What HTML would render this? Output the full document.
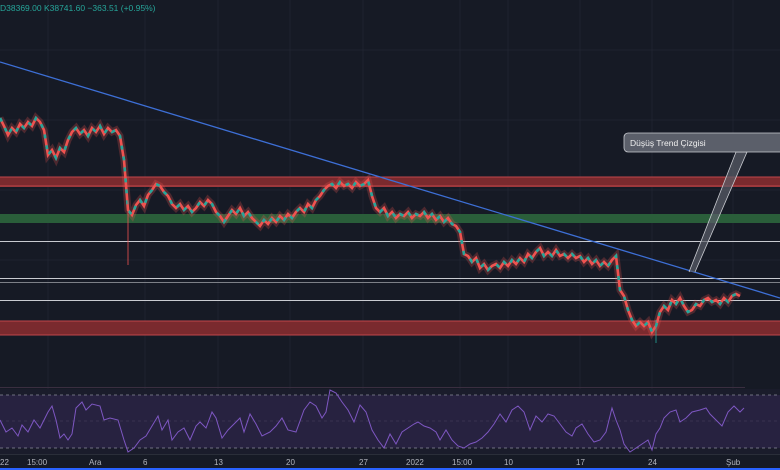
<!DOCTYPE html>
<html><head><meta charset="utf-8"><style>
html,body{margin:0;padding:0;background:#161a25;width:780px;height:470px;overflow:hidden;font-family:"Liberation Sans",sans-serif}
svg{display:block}
</style></head><body>
<svg width="780" height="470" xmlns="http://www.w3.org/2000/svg">
<defs>
<polyline id="pp" fill="none" points="0,118 4,126 8,135 12,128 16,132 20,124 24,128 28,122 32,126 36,118 40,122 44,130 48,155 52,150 56,158 60,148 64,152 68,140 72,132 76,128 80,134 84,130 88,136 92,128 96,132 100,126 104,134 108,128 112,132 116,130 120,136 124,160 126,185 128,210 132,215 136,205 140,200 144,206 148,195 152,190 156,184 160,186 164,192 168,196 172,204 176,208 180,204 184,210 188,206 192,212 196,208 200,202 204,206 208,200 212,204 216,212 220,216 224,222 228,216 232,210 236,214 240,208 244,216 248,212 252,218 256,222 260,226 264,220 268,224 272,218 276,222 280,216 284,220 288,214 292,218 296,212 300,208 304,212 308,204 312,208 316,200 320,196 324,190 328,186 332,184 336,188 340,182 344,186 348,184 352,188 356,182 360,186 364,184 368,180 372,196 376,208 380,212 384,208 388,216 392,212 396,218 400,214 404,216 408,212 412,218 416,214 420,216 424,212 428,218 432,214 436,220 440,216 444,222 448,218 452,224 456,226 460,232 464,254 468,256 472,262 476,258 480,268 484,264 488,270 492,266 496,264 500,268 504,262 508,266 512,260 516,264 520,258 524,262 528,254 532,258 536,252 540,248 544,256 548,252 552,256 556,250 560,256 564,254 568,258 572,254 576,258 580,256 584,262 588,258 592,264 596,260 600,266 604,262 608,266 612,260 616,256 620,290 624,296 628,310 632,320 636,326 640,322 644,326 648,322 652,332 656,326 660,312 664,306 668,310 672,300 676,304 680,298 684,306 688,312 692,310 696,304 700,306 704,300 708,298 712,302 716,300 720,304 724,298 728,302 732,296 736,294 740,296"/>
</defs>
<rect width="780" height="470" fill="#161a25"/>
<g stroke="#1f2330" stroke-width="1">
<line x1="48" y1="0" x2="48" y2="455"/><line x1="145" y1="0" x2="145" y2="455"/><line x1="218" y1="0" x2="218" y2="455"/><line x1="290" y1="0" x2="290" y2="455"/><line x1="363" y1="0" x2="363" y2="455"/><line x1="460" y1="0" x2="460" y2="455"/><line x1="508" y1="0" x2="508" y2="455"/><line x1="580" y1="0" x2="580" y2="455"/><line x1="652" y1="0" x2="652" y2="455"/><line x1="733" y1="0" x2="733" y2="455"/>
<line x1="0" y1="50" x2="780" y2="50"/><line x1="0" y1="120" x2="780" y2="120"/><line x1="0" y1="190" x2="780" y2="190"/><line x1="0" y1="260" x2="780" y2="260"/><line x1="0" y1="330" x2="780" y2="330"/>
</g>
<text x="0" y="11" font-size="8.5" fill="#26a69a">D38369.00 K38741.60 −363.51 (+0.95%)</text>
<rect x="0" y="177" width="780" height="10" fill="#7a2a2e"/><line x1="0" y1="177" x2="780" y2="177" stroke="#c0454a"/><line x1="0" y1="186" x2="780" y2="186" stroke="#c0454a"/>
<rect x="0" y="214" width="780" height="9" fill="#2a5e3a"/>
<rect x="0" y="321" width="780" height="14" fill="#7a2a2e"/><line x1="0" y1="321" x2="780" y2="321" stroke="#c0454a"/><line x1="0" y1="335" x2="780" y2="335" stroke="#c0454a"/>
<g stroke="#c9cbd1" stroke-width="1"><line x1="0" y1="241.5" x2="780" y2="241.5"/><line x1="0" y1="278.5" x2="780" y2="278.5"/><line x1="0" y1="300.5" x2="780" y2="300.5"/></g>
<line x1="0" y1="282.5" x2="780" y2="282.5" stroke="#7d8087"/>
<use href="#pp" stroke="#ef5350" stroke-width="7" stroke-opacity="0.25"/>
<use href="#pp" stroke="#ef5350" stroke-width="2.6"/>
<use href="#pp" stroke="#26a69a" stroke-width="2.6" stroke-dasharray="4,7"/>
<line x1="128" y1="200" x2="128" y2="265" stroke="#ef5350" stroke-width="0.8"/>
<line x1="656" y1="320" x2="656" y2="343" stroke="#26a69a" stroke-width="0.8"/>
<line x1="0" y1="62" x2="780" y2="298" stroke="#3d6fd6" stroke-width="1.3"/>
<path d="M689 272 L736 152 L747 152 L695 272" fill="#5b5f6a" fill-opacity="0.7" stroke="#c9cbd1" stroke-width="0.8"/>
<rect x="624" y="133" width="160" height="19" rx="4" fill="#5b5f6a" stroke="#c9cbd1" stroke-width="0.8"/>
<text x="630" y="146" font-size="8.5" fill="#f0f0f0">Düşüş Trend Çizgisi</text>
<line x1="0" y1="387.5" x2="745" y2="387.5" stroke="#3a2e40"/>
<rect x="0" y="389" width="780" height="66" fill="#1a1c2b"/>
<rect x="0" y="395" width="780" height="53" fill="#272240"/>
<line x1="0" y1="395" x2="780" y2="395" stroke="#8a8a9a" stroke-dasharray="3,3" stroke-width="0.7"/>
<line x1="0" y1="448" x2="780" y2="448" stroke="#8a8a9a" stroke-dasharray="3,3" stroke-width="0.7"/>
<line x1="0" y1="421" x2="780" y2="421" stroke="#4a4560" stroke-dasharray="3,3" stroke-width="0.5"/>
<polyline fill="none" stroke="#7e57c2" stroke-width="1" points="0,420 6,432 12,428 18,436 22,425 28,432 34,420 40,428 48,412 52,406 56,420 60,438 64,434 68,440 72,434 76,408 82,402 86,410 92,404 100,406 104,420 110,418 118,420 124,440 128,452 134,448 140,440 146,436 152,426 158,416 162,430 168,420 172,440 178,432 184,428 190,440 196,426 200,422 206,428 212,412 216,418 222,438 228,430 234,424 240,418 244,432 250,414 256,424 262,436 270,432 276,426 282,418 288,430 296,432 304,410 310,402 316,406 322,418 326,412 330,390 336,393 342,402 348,410 354,422 360,405 366,412 372,430 378,440 384,448 390,434 396,444 402,432 408,428 414,424 418,422 424,426 430,428 436,432 440,440 446,430 452,440 458,446 464,448 470,444 476,442 482,438 488,432 494,424 500,414 506,422 512,410 518,406 524,412 530,430 536,416 542,422 548,414 554,416 560,424 566,432 572,436 576,428 582,424 588,434 594,442 600,440 606,432 612,408 616,420 620,430 624,444 630,452 636,448 642,444 648,440 652,450 656,434 660,428 664,418 670,412 676,410 680,422 686,418 692,412 700,410 706,408 710,414 716,420 722,426 728,412 734,406 740,412 744,408"/>
<line x1="0" y1="454.5" x2="780" y2="454.5" stroke="#2a2e39"/>
<g font-size="8" fill="#b2b5be">
<text x="0" y="465">22</text><text x="27" y="465">15:00</text><text x="89" y="465">Ara</text><text x="143" y="465">6</text><text x="214" y="465">13</text><text x="286" y="465">20</text><text x="359" y="465">27</text><text x="406" y="465">2022</text><text x="452" y="465">15:00</text><text x="504" y="465">10</text><text x="576" y="465">17</text><text x="648" y="465">24</text><text x="726" y="465">Şub</text>
</g>
<rect x="0" y="468" width="780" height="2" fill="#2962ff"/>
</svg>
</body></html>
